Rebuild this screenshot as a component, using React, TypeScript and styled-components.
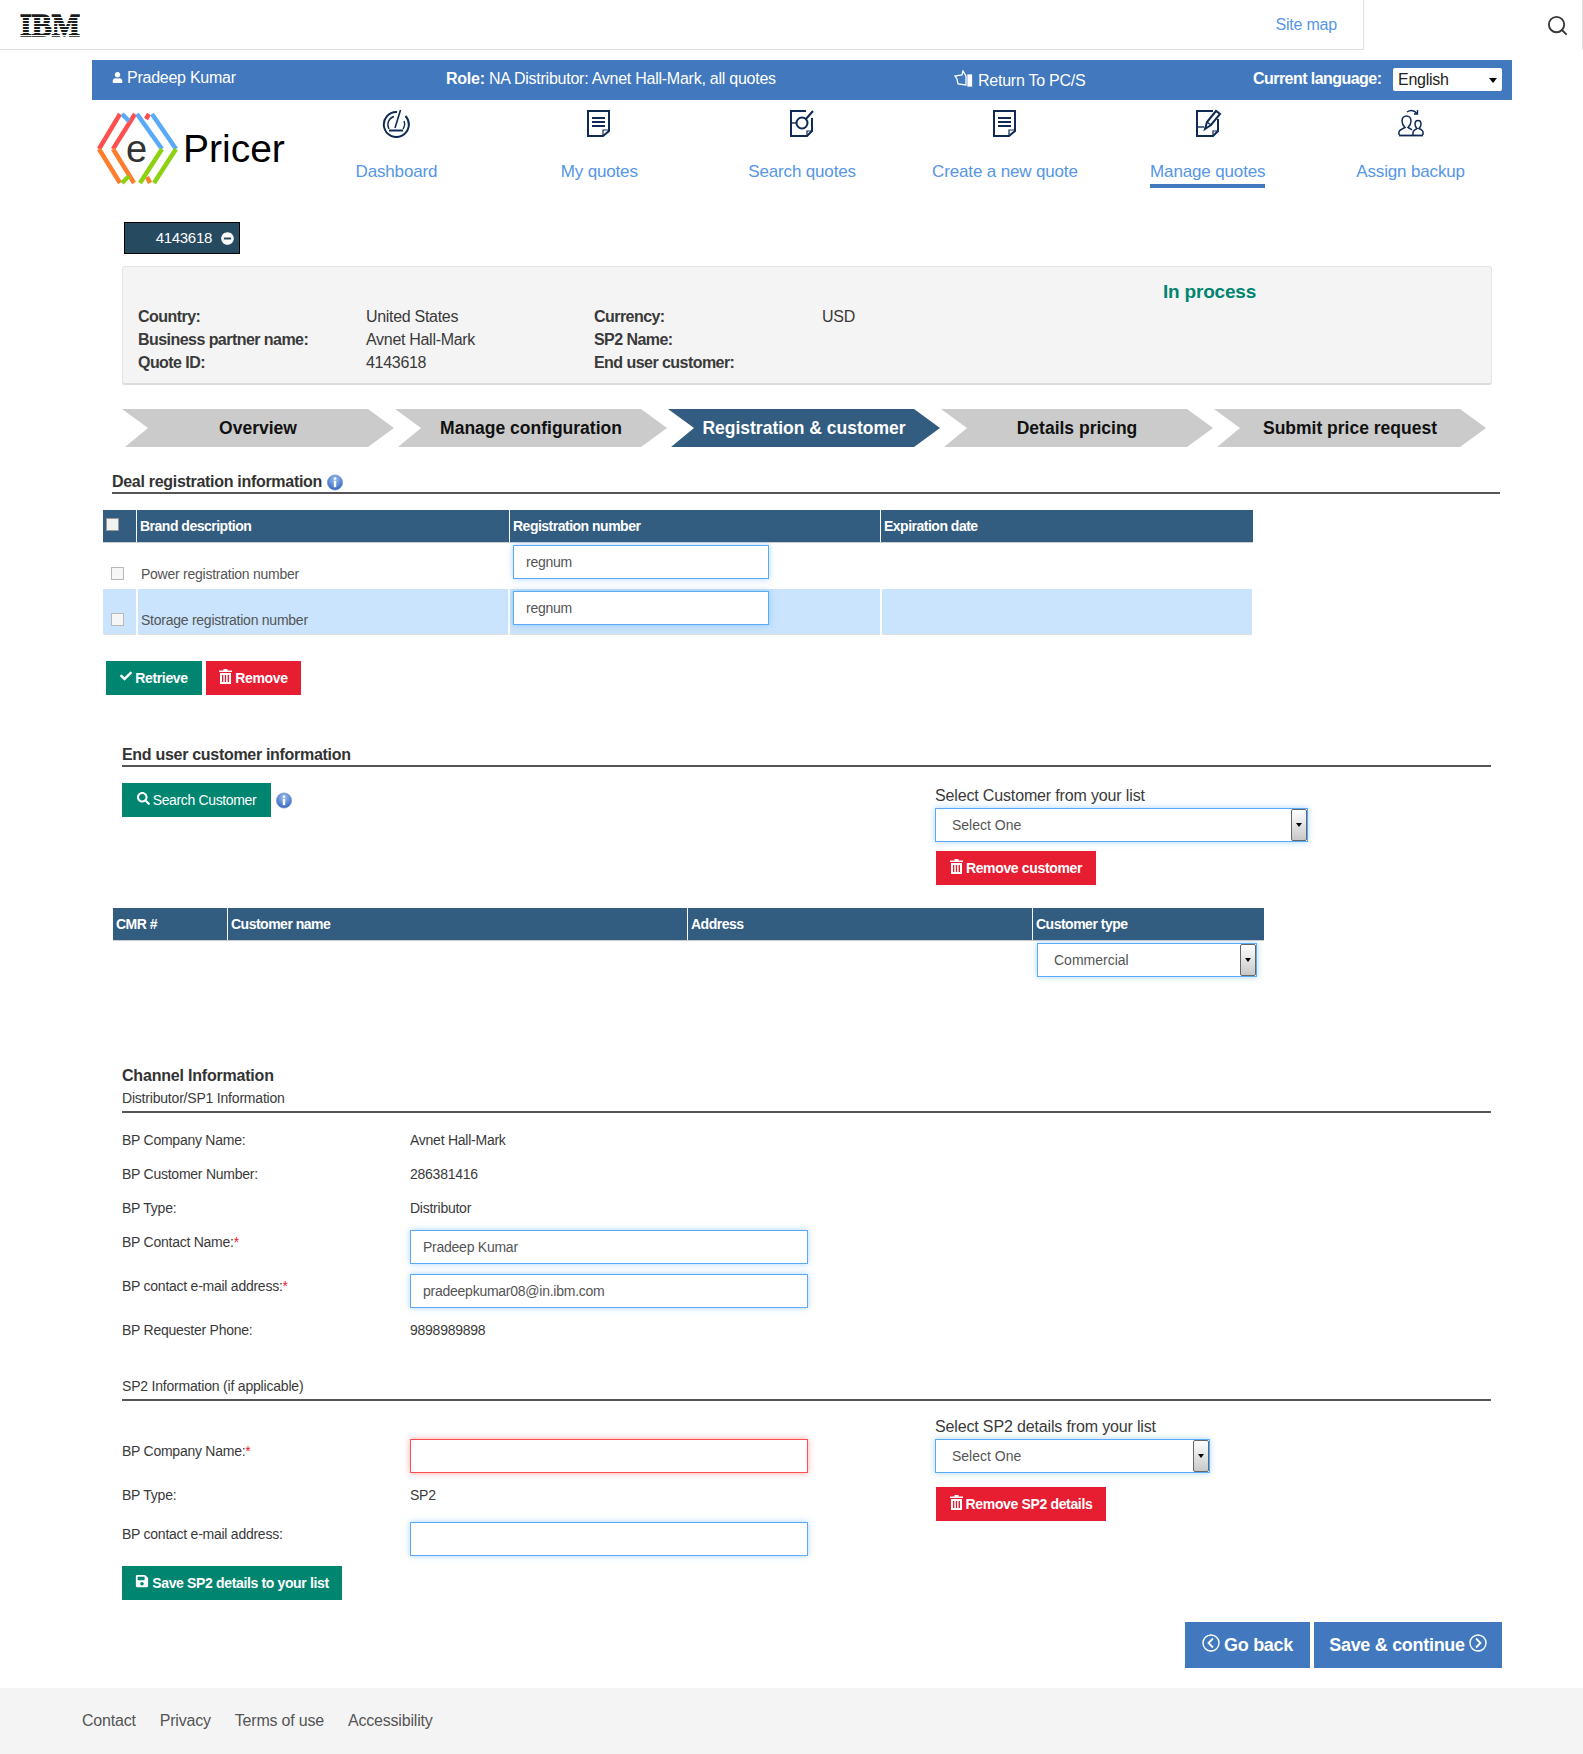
import React from "react";
import styled, { createGlobalStyle } from "styled-components";
import { Search } from "lucide-react";
import { FaUser, FaSave, FaMinusCircle, FaCheck, FaSearch } from "react-icons/fa";

const GlobalStyle = createGlobalStyle`
  html, body {
    margin: 0;
    padding: 0;
    background: #fff;
    color: #3a3a3a;
    font-family: "Liberation Sans", Arial, sans-serif;
    font-size: 14px;
    line-height: 20px;
  }
  * { box-sizing: border-box; }
`;

const Page = styled.div`
  width: 1583px;
  min-height: 1754px;
`;

const TopHeader = styled.header`
  display: flex;
  height: 50px;
`;

const TopLeft = styled.div`
  width: 1364px;
  display: flex;
  align-items: center;
  justify-content: space-between;
  padding: 0 26px 0 20px;
  border-bottom: 1px solid #e0e0e0;
  border-right: 1px solid #e0e0e0;
`;

const TopRight = styled.div`
  flex: 1;
  display: flex;
  align-items: center;
  justify-content: flex-end;
  padding-right: 13px;
  border-right: 1px solid #e0e0e0;
  color: #3a3a3a;
`;

const SiteMap = styled.a`
  color: #5596e6;
  font-size: 16px;
  letter-spacing: -0.2px;
`;

const UserBar = styled.div`
  margin: 10px 0 0 92px;
  width: 1420px;
  height: 40px;
  padding-bottom: 2px;
  background: #4178be;
  color: #fff;
  font-size: 16px;
  letter-spacing: -0.25px;
  display: flex;
  align-items: center;
`;

const UserName = styled.div`
  width: 354px;
  padding-left: 20px;
  display: flex;
  align-items: center;
  gap: 4px;
  margin-top: -3px;
`;

const RoleText = styled.div`
  width: 508px;
`;

const ReturnLink = styled.div`
  width: 299px;
  display: flex;
  align-items: center;
  gap: 4px;
  margin-top: 3px;
  svg { margin-top: -4px; }
`;

const Language = styled.div`
  flex: 1;
  display: flex;
  align-items: center;
  justify-content: space-between;
  padding-right: 10px;
`;

const LanguageLabel = styled.b`
  letter-spacing: -0.55px;
`;

const LanguageSelect = styled.div`
  width: 109px;
  height: 23px;
  background: #fff;
  border-radius: 2px;
  color: #222;
  padding-left: 5px;
  line-height: 23px;
  position: relative;
  &::after {
    content: "";
    position: absolute;
    right: 5px;
    top: 10px;
    border: 4px solid transparent;
    border-top: 5px solid #000;
    border-bottom: 0;
  }
`;

const BrandRow = styled.div`
  margin-left: 92px;
  width: 1420px;
  height: 90px;
  display: flex;
`;

const LogoBox = styled.div`
  width: 203px;
  padding-top: 5px;
`;

const Nav = styled.nav`
  flex: 1;
  display: grid;
  grid-template-columns: repeat(6, 1fr);
`;

const NavItem = styled.a`
  display: flex;
  flex-direction: column;
  align-items: center;
  padding-top: 8px;
  color: #5596e6;
  font-size: 17px;
  letter-spacing: -0.15px;
`;

const NavIcon = styled.div`
  height: 32px;
  color: #0f2a54;
`;

const NavLabel = styled.span<{ $active?: boolean }>`
  margin-top: 22px;
  padding-bottom: 2px;
  line-height: 20px;
  border-bottom: 4px solid ${(p) => (p.$active ? "#4178be" : "transparent")};
`;

const QuoteTag = styled.div`
  margin: 32px 0 0 124px;
  width: 116px;
  height: 32px;
  background: #264a60;
  border: 1px solid #000;
  color: #fff;
  font-size: 15px;
  letter-spacing: -0.3px;
  display: flex;
  align-items: center;
  justify-content: flex-end;
  padding-right: 5px;
  gap: 9px;
`;

const SummaryPanel = styled.section`
  position: relative;
  margin: 12px 0 0 122px;
  width: 1370px;
  height: 119px;
  background: #f4f4f4;
  border: 1px solid #e4e4e4;
  border-bottom: 2px solid #dcdcdc;
  border-radius: 3px;
  padding: 38px 0 0 15px;
  font-size: 16px;
  letter-spacing: -0.3px;
  line-height: 23px;
  display: grid;
  grid-template-columns: 228px 228px 228px 1fr;
  grid-auto-rows: 23px;
`;

const SummaryLabel = styled.div`
  font-weight: 700;
  letter-spacing: -0.55px;
`;

const StatusText = styled.div`
  position: absolute;
  left: 1040px;
  top: 13px;
  font-size: 19px;
  font-weight: 700;
  color: #008571;
  letter-spacing: -0.2px;
`;

const Steps = styled.div`
  margin: 24px 0 0 122px;
  height: 39px;
  display: flex;
  gap: 1px;
`;

const Step = styled.div<{ $active?: boolean }>`
  width: 272px;
  height: 38px;
  display: flex;
  align-items: center;
  justify-content: center;
  font-size: 17.5px;
  font-weight: 700;
  background: ${(p) => (p.$active ? "#325c80" : "#cbcbcb")};
  color: ${(p) => (p.$active ? "#fff" : "#111")};
  clip-path: polygon(0 0, 246px 0, 100% 50%, 246px 100%, 3px 100%, 26px 50%);
`;

const SectionTitle = styled.h2<{ $left: number; $width: number; $top: number }>`
  margin: ${(p) => p.$top}px 0 0 ${(p) => p.$left}px;
  width: ${(p) => p.$width}px;
  padding-top: 2px;
  border-bottom: 2px solid #555;
  font-size: 16px;
  line-height: 20px;
  font-weight: 700;
  letter-spacing: -0.3px;
  color: #333;
  display: flex;
  align-items: center;
  gap: 5px;
`;

const SubTitle = styled.div<{ $top?: number; $bottom?: number }>`
  margin: ${(p) => p.$top ?? 0}px 0 ${(p) => p.$bottom ?? 0}px 122px;
  width: 1369px;
  padding-bottom: 2px;
  border-bottom: 2px solid #555;
  font-size: 14px;
  line-height: 22px;
  letter-spacing: -0.2px;
`;

const ChannelTitle = styled.h3`
  margin: 88px 0 0 122px;
  font-size: 16px;
  line-height: 22px;
  font-weight: 700;
  letter-spacing: -0.2px;
  color: #333;
`;

const DataHead = styled.div<{ $columns: string; $left: number; $top: number }>`
  margin: ${(p) => p.$top}px 0 0 ${(p) => p.$left}px;
  display: grid;
  grid-template-columns: ${(p) => p.$columns};
  height: 33px;
  background: #325c80;
  border-bottom: 1px solid #ccc;
  width: fit-content;
`;

const HeadCell = styled.div`
  padding: 0 3px;
  display: flex;
  align-items: center;
  color: #fff;
  font-size: 14px;
  font-weight: 700;
  letter-spacing: -0.5px;
  border-right: 1px solid #fff;
  &:last-child { border-right: 0; }
`;

const HeadCheckbox = styled.span`
  display: block;
  width: 13px;
  height: 13px;
  margin: -4px 0 0 0;
  background: #f2f2f2;
  border: 1px solid #999;
`;

const RegRow = styled.div`
  margin-left: 103px;
  display: grid;
  grid-template-columns: 34px 372px 372px 372px;
  height: 46px;
`;

const RegCell = styled.div<{ $tinted?: boolean }>`
  background: ${(p) => (p.$tinted ? "#c9e4fc" : "transparent")};
  border-bottom: 1px solid ${(p) => (p.$tinted ? "#e0e0e0" : "transparent")};
  margin: 0 1px;
  padding: 2px 0 0 3px;
  display: flex;
  font-size: 14px;
  letter-spacing: -0.25px;
  color: #555;
  &:first-child { margin-left: 0; padding-left: 0; }
`;

const RegLabel = styled.span`
  align-self: flex-end;
  margin-bottom: 4px;
`;

const RowCheckbox = styled.span`
  display: block;
  width: 13px;
  height: 13px;
  margin: 22px 0 0 8px;
  background: #f6f6f6;
  border: 1px solid #b8b8b8;
`;

const TextInput = styled.div<{ $width: number; $error?: boolean }>`
  width: ${(p) => p.$width}px;
  height: 34px;
  background: #fff;
  border: 1px solid ${(p) => (p.$error ? "#ff5050" : "#5aaafa")};
  box-shadow: 0 0 6px ${(p) => (p.$error ? "rgba(255,80,80,.5)" : "rgba(90,170,250,.5)")};
  padding-left: 12px;
  display: flex;
  align-items: center;
  font-size: 14px;
  letter-spacing: -0.25px;
  color: #555;
`;

const ButtonRow = styled.div`
  margin: 26px 0 0 106px;
  display: flex;
  gap: 4px;
`;

const ActionButton = styled.button<{ $tone: "green" | "red"; $width: number; $plain?: boolean }>`
  width: ${(p) => p.$width}px;
  height: 34px;
  border: 0;
  padding: 0;
  background: ${(p) => (p.$tone === "green" ? "#008571" : "#e71d32")};
  color: #fff;
  font-family: inherit;
  font-size: 14px;
  font-weight: ${(p) => (p.$plain ? 400 : 700)};
  letter-spacing: -0.35px;
  display: flex;
  align-items: center;
  justify-content: center;
  gap: 3px;
`;

const ButtonGlyph = styled.span`
  display: inline-flex;
  margin-top: -4px;
  font-size: 14px;
`;

const SplitSection = styled.div<{ $height: number; $top: number }>`
  margin: ${(p) => p.$top}px 0 0 122px;
  height: ${(p) => p.$height}px;
  display: grid;
  grid-template-columns: 813px 1fr;
`;

const SearchLine = styled.div`
  display: flex;
  align-items: center;
  gap: 5px;
  height: 34px;
`;

const SideColumn = styled.div<{ $top: number }>`
  margin-top: ${(p) => p.$top}px;
`;

const SideLabel = styled.div`
  font-size: 16px;
  line-height: 20px;
  letter-spacing: -0.15px;
  margin-bottom: 2px;
`;

const SelectBox = styled.div<{ $width: number }>`
  width: ${(p) => p.$width}px;
  height: 34px;
  background: #fff;
  border: 1px solid #5aaafa;
  box-shadow: 0 0 6px rgba(90, 170, 250, 0.5);
  padding-left: 16px;
  display: flex;
  align-items: center;
  justify-content: space-between;
  font-size: 14px;
  color: #555;
`;

const SelectArrow = styled.span`
  width: 16px;
  height: 32px;
  background: linear-gradient(#fff, #c8c8c8);
  border: 1px solid #666;
  border-radius: 2px;
  display: flex;
  align-items: center;
  justify-content: center;
  &::after {
    content: "";
    border: 3.5px solid transparent;
    border-top: 4px solid #000;
    border-bottom: 0;
  }
`;

const SideAction = styled.div<{ $top: number }>`
  margin-top: ${(p) => p.$top}px;
  margin-left: 1px;
`;

const CommercialRow = styled.div`
  margin: 2px 0 0 1037px;
`;

const InfoRow = styled.div`
  margin-left: 122px;
  height: 34px;
  display: grid;
  grid-template-columns: 288px 1fr;
  align-items: center;
  font-size: 14px;
  letter-spacing: -0.25px;
`;

const InputRow = styled.div<{ $top?: number }>`
  margin: ${(p) => p.$top ?? 5}px 0 5px 122px;
  display: grid;
  grid-template-columns: 288px 1fr;
  font-size: 14px;
  letter-spacing: -0.25px;
`;

const InputLabel = styled.div`
  padding-top: 2px;
`;

const Required = styled.span`
  color: #e71d32;
`;

const SplitColumn = styled.div`
  min-width: 0;
`;

const FlushRow = styled(InputRow)`
  margin-left: 0;
`;

const FlushInfo = styled(InfoRow)`
  margin-left: 0;
`;

const SaveLine = styled.div`
  margin-top: 10px;
`;

const PageActions = styled.div`
  margin: 22px 81px 0 0;
  display: flex;
  justify-content: flex-end;
  gap: 4px;
`;

const BigButton = styled.button<{ $width: number }>`
  width: ${(p) => p.$width}px;
  height: 46px;
  border: 0;
  padding: 0;
  background: #4178be;
  color: #fff;
  font-family: inherit;
  font-size: 18px;
  font-weight: 700;
  letter-spacing: -0.3px;
  display: flex;
  align-items: center;
  justify-content: center;
  gap: 4px;
`;

const Footer = styled.footer`
  margin-top: 20px;
  height: 66px;
  background: #f4f4f4;
  padding-left: 82px;
  display: flex;
  align-items: center;
  gap: 24px;
  font-size: 16px;
  letter-spacing: -0.2px;
  color: #555;
`;

const TrashIcon = () => (
  <svg width="13" height="15" viewBox="0 0 13 15" fill="currentColor">
    <path d="M4.5 0h4v1.5H13V3H0V1.5h4.5zM1 4h11v11H1zM3 6v7h1.3V6zm2.8 0v7h1.3V6zm2.8 0v7H10V6z" fillRule="evenodd" />
  </svg>
);

const CircleChevron = ({ left }: { left?: boolean }) => (
  <svg width="18" height="18" viewBox="0 0 18 18" fill="none" stroke="currentColor" strokeWidth="1.4">
    <circle cx="9" cy="9" r="8" />
    <path d={left ? "M11 4.5 6.5 9l4.5 4.5" : "M7 4.5 11.5 9 7 13.500"} strokeWidth="1.8" />
  </svg>
);

const InfoIcon = () => (
  <svg width="16" height="17" viewBox="0 0 16 17">
    <defs>
      <radialGradient id="infoFill" cx="50%" cy="30%" r="75%">
        <stop offset="0" stopColor="#9cc0ee" />
        <stop offset="1" stopColor="#2a5fc0" />
      </radialGradient>
    </defs>
    <circle cx="8" cy="8.5" r="7.6" fill="url(#infoFill)" stroke="#6d8fc4" strokeWidth="0.6" />
    <circle cx="8" cy="4.6" r="1.3" fill="#fff" />
    <rect x="6.8" y="6.8" width="2.4" height="6.4" fill="#fff" />
  </svg>
);

const IbmLogo = () => (
  <svg width="60" height="36" viewBox="0 0 60 36">
    <text x="0" y="29" fontFamily="Liberation Serif" fontWeight="700" fontSize="32" textLength="60" lengthAdjust="spacingAndGlyphs" fill="#1c1c1c" stroke="#1c1c1c" strokeWidth="1.3">
      IBM
    </text>
    {[10, 13, 16, 19, 22, 25, 28].map((y) => (
      <rect key={y} x="0" y={y} width="60" height="1" fill="#fff" />
    ))}
  </svg>
);

const EPricerLogo = () => (
  <svg width="200" height="85" viewBox="0 0 200 85" fill="none" strokeWidth="4.500">
    <path d="M57 9 54 14M28 9 7 44M43 9 21 44" stroke="#ff5050" />
    <path d="M7 44 28 78M21 44 42 78M55 72 58 78" stroke="#fd7e2e" />
    <path d="M30 9 37 16M45 9 70 44M60 9 84 44" stroke="#5aaafa" />
    <path d="M70 44 48 78M84 44 62 78M37 71 30 78" stroke="#8cd211" />
    <text x="34" y="57" fontFamily="Liberation Sans" fontSize="38" fill="#333" stroke="none">e</text>
    <text x="91" y="57" fontFamily="Liberation Sans" fontSize="39" fill="#000" stroke="none">Pricer</text>
  </svg>
);

const DocIcon = () => (
  <svg width="30" height="30" viewBox="0 0 30 30" fill="none" stroke="currentColor" strokeWidth="2">
    <path d="M4 3h21v20l-6 5H4z" />
    <path d="M25 22h-6v6" strokeWidth="1.2" />
    <path d="M8 10h13M8 14h13M8 18h13" />
  </svg>
);

const GaugeIcon = () => (
  <svg width="30" height="30" viewBox="0 0 30 30" fill="none" stroke="currentColor" strokeWidth="2">
    <path d="M16 4A12.500 12.500 0 1 0 24.500 8" />
    <path d="M13 8.500A8.500 8.500 0 0 0 8 21M22 21a8.500 8.500 0 0 0 1-8" strokeWidth="1.400" />
    <path d="M14 20 19.500 2" strokeWidth="1.600" />
    <path d="M8 22.500h14" />
  </svg>
);

const SearchDocIcon = () => (
  <svg width="30" height="30" viewBox="0 0 30 30" fill="none" stroke="currentColor" strokeWidth="2">
    <path d="M19 3H4v25h16l5-5V10" />
    <path d="M25 23h-5v5" strokeWidth="1.2" />
    <circle cx="15" cy="15" r="5.5" />
    <path d="M19 11 26 3" />
    <path d="M4 15h5" strokeWidth="1.4" />
  </svg>
);

const EditDocIcon = () => (
  <svg width="30" height="30" viewBox="0 0 30 30" fill="none" stroke="currentColor" strokeWidth="2">
    <path d="M20 3H4v25h16l5-5V11" />
    <path d="M25 23h-5v5" strokeWidth="1.2" />
    <path d="M4 19h7" strokeWidth="1.4" />
    <path d="M12 21 14 14 23 3l4 3-9 11z" />
    <path d="M14 14l4 3" strokeWidth="1.4" />
  </svg>
);

const BackupIcon = () => (
  <svg width="30" height="30" viewBox="0 0 30 30" fill="none" stroke="currentColor" strokeWidth="1.500">
    <path d="M3 27v-3c0-2 3-3 6-4.500-2-2-3-4-3-6.500 0-3 2-5 4.500-5s4.500 2 4.500 5c0 2.500-1 4.500-3 6.500 2 1 3 1.500 4 2.500" />
    <path d="M3 27.500h24" strokeWidth="1.800" />
    <path d="M27 27v-3c0-1.500-2-2.500-4-3.500 1.500-1.500 2-3 2-4.500 0-2-1.300-3.500-3-3.500s-3 1.500-3 3.500c0 1.500.5 3 2 4.500-2 1-3.500 2-4 3.500v3" />
    <path d="M11 4c3-2 7-2 10 1.500M21.500 2v4H18" strokeWidth="1.400" />
  </svg>
);

const ReturnIcon = () => (
  <svg width="20" height="18" viewBox="0 0 20 18" fill="none" stroke="#fff" strokeWidth="1.300">
    <path d="M9 1 8 5 1 6l2 3 1 5 8 1V6z" />
    <rect x="14" y="5" width="3.500" height="11" fill="#fff" />
  </svg>
);

const navItems = [
  { label: "Dashboard", icon: <GaugeIcon /> },
  { label: "My quotes", icon: <DocIcon /> },
  { label: "Search quotes", icon: <SearchDocIcon /> },
  { label: "Create a new quote", icon: <DocIcon /> },
  { label: "Manage quotes", icon: <EditDocIcon />, active: true },
  { label: "Assign backup", icon: <BackupIcon /> },
];

const steps = ["Overview", "Manage configuration", "Registration & customer", "Details pricing", "Submit price request"];

const App: React.FC = () => {
  return (
    <Page>
      <GlobalStyle />
      <TopHeader>
        <TopLeft>
          <IbmLogo />
          <SiteMap>Site map</SiteMap>
        </TopLeft>
        <TopRight>
          <Search size={23} strokeWidth={2} />
        </TopRight>
      </TopHeader>

      <UserBar>
        <UserName>
          <FaUser size={11} />
          Pradeep Kumar
        </UserName>
        <RoleText>
          <b>Role:</b> NA Distributor: Avnet Hall-Mark, all quotes
        </RoleText>
        <ReturnLink>
          <ReturnIcon />
          Return To PC/S
        </ReturnLink>
        <Language>
          <LanguageLabel>Current language:</LanguageLabel>
          <LanguageSelect>English</LanguageSelect>
        </Language>
      </UserBar>

      <BrandRow>
        <LogoBox>
          <EPricerLogo />
        </LogoBox>
        <Nav>
          {navItems.map((item) => (
            <NavItem key={item.label}>
              <NavIcon>{item.icon}</NavIcon>
              <NavLabel $active={item.active}>{item.label}</NavLabel>
            </NavItem>
          ))}
        </Nav>
      </BrandRow>

      <QuoteTag>
        4143618
        <FaMinusCircle size={13} />
      </QuoteTag>

      <SummaryPanel>
        <StatusText>In process</StatusText>
        <SummaryLabel>Country:</SummaryLabel>
        <div>United States</div>
        <SummaryLabel>Currency:</SummaryLabel>
        <div>USD</div>
        <SummaryLabel>Business partner name:</SummaryLabel>
        <div>Avnet Hall-Mark</div>
        <SummaryLabel>SP2 Name:</SummaryLabel>
        <div />
        <SummaryLabel>Quote ID:</SummaryLabel>
        <div>4143618</div>
        <SummaryLabel>End user customer:</SummaryLabel>
        <div />
      </SummaryPanel>

      <Steps>
        {steps.map((s) => (
          <Step key={s} $active={s.startsWith("Registration")}>
            {s}
          </Step>
        ))}
      </Steps>

      <SectionTitle $left={112} $width={1388} $top={22}>
        Deal registration information <InfoIcon />
      </SectionTitle>

      <DataHead $columns="34px 373px 371px 372px" $left={103} $top={16}>
        <HeadCell>
          <HeadCheckbox />
        </HeadCell>
        <HeadCell>Brand description</HeadCell>
        <HeadCell>Registration number</HeadCell>
        <HeadCell>Expiration date</HeadCell>
      </DataHead>
      <RegRow>
        <RegCell>
          <RowCheckbox />
        </RegCell>
        <RegCell>
          <RegLabel>Power registration number</RegLabel>
        </RegCell>
        <RegCell>
          <TextInput $width={256}>regnum</TextInput>
        </RegCell>
        <RegCell />
      </RegRow>
      <RegRow>
        <RegCell $tinted>
          <RowCheckbox />
        </RegCell>
        <RegCell $tinted>
          <RegLabel>Storage registration number</RegLabel>
        </RegCell>
        <RegCell $tinted>
          <TextInput $width={256}>regnum</TextInput>
        </RegCell>
        <RegCell $tinted />
      </RegRow>

      <ButtonRow>
        <ActionButton $tone="green" $width={96}>
          <ButtonGlyph><FaCheck size={12} /></ButtonGlyph>
          Retrieve
        </ActionButton>
        <ActionButton $tone="red" $width={95}>
          <ButtonGlyph><TrashIcon /></ButtonGlyph>
          Remove
        </ActionButton>
      </ButtonRow>

      <SectionTitle $left={122} $width={1369} $top={48}>
        End user customer information
      </SectionTitle>

      <SplitSection $top={16} $height={109}>
        <SearchLine>
          <ActionButton $tone="green" $width={149} $plain>
            <ButtonGlyph><FaSearch size={13} /></ButtonGlyph>
            Search Customer
          </ActionButton>
          <InfoIcon />
        </SearchLine>
        <SideColumn $top={3}>
          <SideLabel>Select Customer from your list</SideLabel>
          <SelectBox $width={373}>
            Select One
            <SelectArrow />
          </SelectBox>
          <SideAction $top={9}>
            <ActionButton $tone="red" $width={160}>
              <ButtonGlyph><TrashIcon /></ButtonGlyph>
              Remove customer
            </ActionButton>
          </SideAction>
        </SideColumn>
      </SplitSection>

      <DataHead $columns="115px 460px 345px 231px" $left={113} $top={16}>
        <HeadCell>CMR #</HeadCell>
        <HeadCell>Customer name</HeadCell>
        <HeadCell>Address</HeadCell>
        <HeadCell>Customer type</HeadCell>
      </DataHead>
      <CommercialRow>
        <SelectBox $width={220}>
          Commercial
          <SelectArrow />
        </SelectBox>
      </CommercialRow>

      <ChannelTitle>Channel Information</ChannelTitle>
      <SubTitle $bottom={10}>Distributor/SP1 Information</SubTitle>

      <InfoRow>
        <span>BP Company Name:</span>
        <span>Avnet Hall-Mark</span>
      </InfoRow>
      <InfoRow>
        <span>BP Customer Number:</span>
        <span>286381416</span>
      </InfoRow>
      <InfoRow>
        <span>BP Type:</span>
        <span>Distributor</span>
      </InfoRow>
      <InputRow>
        <InputLabel>BP Contact Name:<Required>*</Required></InputLabel>
        <TextInput $width={398}>Pradeep Kumar</TextInput>
      </InputRow>
      <InputRow $top={10}>
        <InputLabel>BP contact e-mail address:<Required>*</Required></InputLabel>
        <TextInput $width={398}>pradeepkumar08@in.ibm.com</TextInput>
      </InputRow>
      <InfoRow>
        <span>BP Requester Phone:</span>
        <span>9898989898</span>
      </InfoRow>

      <SubTitle $top={28}>SP2 Information (if applicable)</SubTitle>

      <SplitSection $top={38} $height={161}>
        <SplitColumn>
          <FlushRow $top={0}>
            <InputLabel>BP Company Name:<Required>*</Required></InputLabel>
            <TextInput $width={398} $error />
          </FlushRow>
          <FlushInfo>
            <span>BP Type:</span>
            <span>SP2</span>
          </FlushInfo>
          <FlushRow $top={10}>
            <InputLabel>BP contact e-mail address:</InputLabel>
            <TextInput $width={398} />
          </FlushRow>
          <SaveLine>
            <ActionButton $tone="green" $width={220}>
              <ButtonGlyph><FaSave size={14} /></ButtonGlyph>
              Save SP2 details to your list
            </ActionButton>
          </SaveLine>
        </SplitColumn>
        <SideColumn $top={-22}>
          <SideLabel>Select SP2 details from your list</SideLabel>
          <SelectBox $width={275}>
            Select One
            <SelectArrow />
          </SelectBox>
          <SideAction $top={14}>
            <ActionButton $tone="red" $width={170}>
              <ButtonGlyph><TrashIcon /></ButtonGlyph>
              Remove SP2 details
            </ActionButton>
          </SideAction>
        </SideColumn>
      </SplitSection>

      <PageActions>
        <BigButton $width={125}>
          <ButtonGlyph><CircleChevron left /></ButtonGlyph>
          Go back
        </BigButton>
        <BigButton $width={188}>
          Save &amp; continue
          <ButtonGlyph><CircleChevron /></ButtonGlyph>
        </BigButton>
      </PageActions>

      <Footer>
        <span>Contact</span>
        <span>Privacy</span>
        <span>Terms of use</span>
        <span>Accessibility</span>
      </Footer>
    </Page>
  );
};

export default App;
